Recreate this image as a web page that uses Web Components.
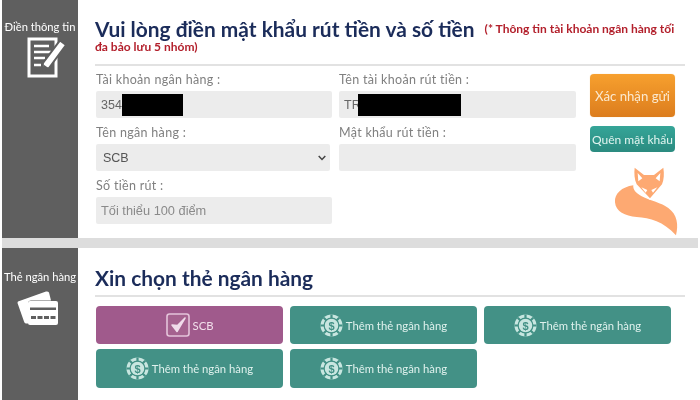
<!DOCTYPE html>
<html lang="vi">
<head>
<meta charset="utf-8">
<title>Điền thông tin</title>
<style>
    html, body { margin: 0; height: 100%; background: #fff; overflow: hidden; }
    body { font-family: Lato, "Liberation Sans", sans-serif; }
    #page { width: 700px; height: 400px; }
</style>
</head>
<body>
<withdraw-page id="page">
    <info-panel label="Điền thông tin" icon="form" slot="form">
        <form-heading>
            Vui lòng điền mật khẩu rút tiền và số tiền
            <span slot="note">(* Thông tin tài khoản ngân hàng tối đa bảo lưu 5 nhóm)</span>
        </form-heading>
        <withdraw-form></withdraw-form>
    </info-panel>
    <info-panel label="Thẻ ngân hàng" icon="card" slot="bank">
        <form-heading>Xin chọn thẻ ngân hàng</form-heading>
        <bank-grid>
            <bank-card selected>SCB</bank-card>
            <bank-card>Thêm thẻ ngân hàng</bank-card>
            <bank-card>Thêm thẻ ngân hàng</bank-card>
            <bank-card>Thêm thẻ ngân hàng</bank-card>
            <bank-card>Thêm thẻ ngân hàng</bank-card>
        </bank-grid>
    </info-panel>
</withdraw-page>

<script>
const icons = {
    form: `
        <svg width="40" height="41" viewBox="0 0 40 41">
            <path d="M2 2h27v37H2z" fill="none" stroke="#fff" stroke-width="3"/>
            <path d="M7 9h15M7 15h17M7 21h11M7 28h7" stroke="#fff" stroke-width="2.6" fill="none"/>
            <path d="M33 3.500l6 4.500-17 23-7 3 1-8z" fill="#fff" stroke="#5f5f5f" stroke-width="2"/>
            <path d="M15.500 33.500l1-6 5 3.500z" fill="#5f5f5f"/>
        </svg>`,
    card: `
        <svg width="42" height="35" viewBox="0 0 42 35">
            <path d="M1 10.500 29 0.500q2-.5 3 1l2 8H14q-3 0-3 3v18q0 1 .5 2l-2.500 0q-1.500 0-2-2L0.500 12q0-1 .5-1.500z" fill="#fff"/>
            <rect x="11" y="10" width="30" height="24" rx="2" fill="#fff"/>
            <rect x="13" y="16.500" width="26" height="2.500" fill="#5f5f5f"/>
            <path d="M14 26.500h5M20.500 26.500h5M27 26.500h5M33.500 26.500h5" stroke="#5f5f5f" stroke-width="3"/>
        </svg>`,
    chip: `
        <svg width="23" height="23" viewBox="0 0 23 23">
            <circle cx="11.500" cy="11.500" r="11" fill="#c8e6e0"/>
            <circle cx="11.500" cy="11.500" r="8" fill="#439186"/>
            <circle cx="11.500" cy="11.500" r="6.800" fill="#c8e6e0"/>
            <path d="M11.500 0.500v4M11.500 18.500v4M0.500 11.500h4M18.500 11.500h4M3.700 3.700l2.800 2.800M16.500 16.500l2.800 2.800M19.300 3.700l-2.800 2.800M6.500 16.500l-2.800 2.800" stroke="#439186" stroke-width="2.200"/>
            <text x="11.500" y="15.500" text-anchor="middle" font-family="Liberation Sans" font-size="11" font-weight="700" fill="#439186">$</text>
        </svg>`,
    check: `
        <svg width="24" height="24" viewBox="0 0 24 24">
            <rect x="1" y="1" width="22" height="22" rx="2.500" fill="#a5628f" stroke="#e4c4da" stroke-width="1.600"/>
            <path d="M6 12l5 6.500L19 5l-7.500 7.500z" fill="#f0dcea" stroke="#f0dcea" stroke-width="1.500" stroke-linejoin="round"/>
        </svg>`,
    fox: `
        <svg width="90" height="90" viewBox="0 0 270 270">
            <path fill="#fda972" d="M100 97C65 102 43 122 45 148 47 175 75 190 110 192 150 194 190 205 228 247 236 215 232 185 205 165 185 150 150 143 125 130 108 120 98 110 100 97z"/>
            <path fill="#fda972" stroke="#fff" stroke-width="8" paint-order="stroke" d="M104 44L132 66H162L190 44C193 62 192 80 186 94L150 136 110 94C103 80 102 60 104 44z"/>
            <path fill="#fff" d="M113 60l14 16-12 9zM181 60l-14 16 12 9zM124 103l18 8-5 8zM172 103l-18 8 5 8z"/>
        </svg>`
};

class WithdrawPage extends HTMLElement {
    constructor() {
        super();
        this.attachShadow({ mode: 'open' });
        this.shadowRoot.innerHTML = `
            <style>
                :host {
                    display: grid;
                    grid-template-rows: 238px 152px;
                    row-gap: 10px;
                    padding: 0 2px;
                    filter: blur(0.5px);
                    background:
                        linear-gradient(#fff 43px, #6fbfb5 43px 75px, #2a2a30 75px 217px, #3a5a9a 217px 227px,
                            #d8d8d8 227px 240px, #b8a090 240px 333px, #333 333px 362px, #e6e6e6 362px) right / 2px 100% no-repeat,
                        linear-gradient(#ddd, #ddd) 2px 238px / 696px 10px no-repeat,
                        #fff;
                }
            </style>
            <slot name="form"></slot>
            <slot name="bank"></slot>
        `;
    }
}

class InfoPanel extends HTMLElement {
    constructor() {
        super();
        this.attachShadow({ mode: 'open' });
    }

    connectedCallback() {
        this.shadowRoot.innerHTML = `
            <style>
                :host {
                    display: grid;
                    grid-template-columns: 76px 1fr;
                    background: #fff;
                    color: #1b2c5a;
                }
                .side {
                    background: #5f5f5f;
                    color: #fff;
                    font-size: 11.200px;
                    text-align: center;
                    display: flex;
                    flex-direction: column;
                    align-items: center;
                    white-space: nowrap;
                    padding-top: 20px;
                    line-height: 14px;
                }
                .side svg { display: block; margin: 3px 0 0 14px; }
                :host([icon="card"]) .side { padding-top: 22px; }
                :host([icon="card"]) .side svg { margin: 7px 4px 0 0; }
                .main { padding: 20px 17px 0 17px; min-width: 0; }
                :host([icon="card"]) .main { padding-top: 21px; }
            </style>
            <div class="side">
                <span>${this.getAttribute('label')}</span>
                ${icons[this.getAttribute('icon')]}
            </div>
            <div class="main"><slot></slot></div>
        `;
    }
}

class FormHeading extends HTMLElement {
    constructor() {
        super();
        this.attachShadow({ mode: 'open' });
        this.shadowRoot.innerHTML = `
            <style>
                :host {
                    display: block;
                    font-size: 20.900px;
                    font-weight: 700;
                    line-height: 18px;
                    color: #1b2c5a;
                    padding-bottom: 8px;
                    border-bottom: 2px solid #e2e2e2;
                }
                :host(:has([slot="note"])) { padding-bottom: 5px; }
                ::slotted([slot="note"]) {
                    font-size: 12px;
                    line-height: 10px;
                    color: #b3202c;
                    margin-left: 5px;
                    vertical-align: 4px;
                }
            </style>
            <slot></slot>
            <slot name="note"></slot>
        `;
    }
}

class FormField extends HTMLElement {
    constructor() {
        super();
        this.attachShadow({ mode: 'open' });
    }

    connectedCallback() {
        const select = this.hasAttribute('select');
        this.shadowRoot.innerHTML = `
            <style>
                :host { display: block; }
                label {
                    display: block;
                    font-size: 12.500px;
                    line-height: 16px;
                    letter-spacing: 0.3px;
                    color: #808080;
                    margin-bottom: 3px;
                }
                .box {
                    position: relative;
                    box-sizing: border-box;
                    display: flex;
                    align-items: center;
                    justify-content: space-between;
                    height: 27px;
                    padding: 0 4px 0 5px;
                    background: #ececec;
                    border-radius: 2px;
                    font: 12.500px "Liberation Sans", sans-serif;
                    color: #666;
                }
                :host([select]) .box { padding: 0 4px 0 7px; color: #555; width: 234px; }
                :host([placeholder]) .box { color: #8a8a8a; font-size: 12.800px; }
                .mask {
                    position: absolute;
                    top: 3px;
                    bottom: 2px;
                    left: var(--mask-left, 26px);
                    width: var(--mask-width, 61px);
                    background: #000;
                }
            </style>
            <label>${this.getAttribute('label')}</label>
            <div class="box">
                <span><slot></slot></span>
                ${this.hasAttribute('masked') ? '<i class="mask"></i>' : ''}
                ${select ? `<svg width="8" height="6" viewBox="0 0 8 6"><path d="M.7 1l3.300 3.500L7.300 1" fill="none" stroke="#444" stroke-width="1.500"/></svg>` : ''}
            </div>
        `;
    }
}

class ActionButton extends HTMLElement {
    constructor() {
        super();
        this.attachShadow({ mode: 'open' });
        this.shadowRoot.innerHTML = `
            <style>
                :host {
                    display: flex;
                    align-items: center;
                    justify-content: center;
                    border-radius: 4px;
                    white-space: nowrap;
                    font-size: 13.200px;
                    height: 43px;
                    color: #fbe9cf;
                    background: linear-gradient(#f7a02e, #dc7d1e);
                    box-shadow: 0 0 1px #f1c78a;
                }
                :host([kind="teal"]) {
                    height: 26px;
                    font-size: 12px;
                    color: #e2f5f0;
                    background: linear-gradient(#35a598, #2b8b80);
                    box-shadow: none;
                }
            </style>
            <slot></slot>
        `;
    }
}

class WithdrawForm extends HTMLElement {
    constructor() {
        super();
        this.attachShadow({ mode: 'open' });
        this.shadowRoot.innerHTML = `
            <style>
                :host {
                    display: grid;
                    grid-template-columns: 236px 237px 85px;
                    column-gap: 7px;
                    padding: 6px 0 0 1px;
                }
                form-field { margin-bottom: 7px; }
                .actions {
                    grid-column: 3;
                    grid-row: 1 / span 3;
                    display: flex;
                    flex-direction: column;
                    margin: 2px 0 0 7px;
                    width: 85px;
                    height: 100px;
                }
                action-button { flex: none; }
                action-button[kind="teal"] { margin-top: 9px; }
                .fox { display: block; margin: 1px 0 0 10px; }
            </style>
            <form-field label="Tài khoản ngân hàng :" masked>354</form-field>
            <form-field label="Tên tài khoản rút tiền :" masked style="--mask-left:19px;--mask-width:103px">TR</form-field>
            <form-field label="Tên ngân hàng :" select>SCB</form-field>
            <form-field label="Mật khẩu rút tiền :"></form-field>
            <form-field label="Số tiền rút :" placeholder>Tối thiểu 100 điểm</form-field>
            <div class="actions">
                <action-button>Xác nhận gửi</action-button>
                <action-button kind="teal">Quên mật khẩu</action-button>
                <div class="fox">${icons.fox}</div>
            </div>
        `;
    }
}

class BankGrid extends HTMLElement {
    constructor() {
        super();
        this.attachShadow({ mode: 'open' });
        this.shadowRoot.innerHTML = `
            <style>
                :host {
                    display: grid;
                    grid-template-columns: repeat(3, 187px);
                    grid-template-rows: 38px 39px;
                    gap: 5px 7px;
                    padding: 9px 0 0 1px;
                }
            </style>
            <slot></slot>
        `;
    }
}

class BankCard extends HTMLElement {
    constructor() {
        super();
        this.attachShadow({ mode: 'open' });
    }

    connectedCallback() {
        const selected = this.hasAttribute('selected');
        this.shadowRoot.innerHTML = `
            <style>
                :host {
                    display: flex;
                    align-items: center;
                    justify-content: center;
                    gap: 3px;
                    border-radius: 4px;
                    background: #439186;
                    color: #dff1ed;
                    font-size: 11.300px;
                }
                :host([selected]) { background: #a05a8c; color: #f1dfeb; }
                svg { display: block; }
            </style>
            ${selected ? icons.check : icons.chip}
            <span><slot></slot></span>
        `;
    }
}

customElements.define('withdraw-page', WithdrawPage);
customElements.define('info-panel', InfoPanel);
customElements.define('form-heading', FormHeading);
customElements.define('form-field', FormField);
customElements.define('action-button', ActionButton);
customElements.define('withdraw-form', WithdrawForm);
customElements.define('bank-grid', BankGrid);
customElements.define('bank-card', BankCard);
</script>
</body>
</html>
